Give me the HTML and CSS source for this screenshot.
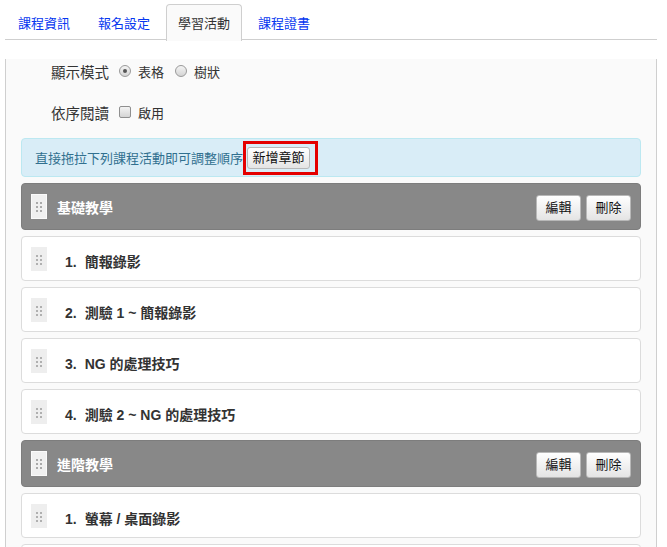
FILE: index.html
```html
<!DOCTYPE html>
<html lang="zh-Hant">
<head>
<meta charset="utf-8">
<title>學習活動</title>
<link rel="stylesheet" href="styles.css">
</head>
<body>
<div class="page">
  <ul class="tabs">
    <li class="tab"><a href="#">課程資訊</a></li>
    <li class="tab"><a href="#">報名設定</a></li>
    <li class="tab active"><a href="#">學習活動</a></li>
    <li class="tab"><a href="#">課程證書</a></li>
  </ul>
  <div class="panel">
    <div class="form-row first">
      <span class="label">顯示模式</span>
      <span class="radio checked"></span><span class="opt">表格</span>
      <span class="radio"></span><span class="opt">樹狀</span>
    </div>
    <div class="form-row second">
      <span class="label">依序閱讀</span>
      <span class="checkbox"></span><span class="opt">啟用</span>
    </div>
    <div class="info">
      <span class="info-text">直接拖拉下列課程活動即可調整順序</span>
      <span class="highlight"><button class="btn add">新增章節</button></span>
    </div>

    <div class="chapter">
      <span class="handle light"><svg width="14" height="23" viewBox="0 0 14 23"><g fill="#aaa"><rect x="4" y="7" width="2" height="2"/><rect x="8" y="7" width="2" height="2"/><rect x="4" y="11" width="2" height="2"/><rect x="8" y="11" width="2" height="2"/><rect x="4" y="15" width="2" height="2"/><rect x="8" y="15" width="2" height="2"/></g></svg></span>
      <span class="chapter-title">基礎教學</span>
      <span class="actions"><button class="btn">編輯</button><button class="btn">刪除</button></span>
    </div>
    <div class="item">
      <span class="handle"><svg width="16" height="24" viewBox="0 0 16 24"><g fill="#b0b0b0"><rect x="5" y="8" width="2" height="2"/><rect x="9" y="8" width="2" height="2"/><rect x="5" y="12" width="2" height="2"/><rect x="9" y="12" width="2" height="2"/><rect x="5" y="16" width="2" height="2"/><rect x="9" y="16" width="2" height="2"/></g></svg></span>
      <span class="item-title"><span class="num">1.</span>簡報錄影</span>
    </div>
    <div class="item">
      <span class="handle"><svg width="16" height="24" viewBox="0 0 16 24"><g fill="#b0b0b0"><rect x="5" y="8" width="2" height="2"/><rect x="9" y="8" width="2" height="2"/><rect x="5" y="12" width="2" height="2"/><rect x="9" y="12" width="2" height="2"/><rect x="5" y="16" width="2" height="2"/><rect x="9" y="16" width="2" height="2"/></g></svg></span>
      <span class="item-title"><span class="num">2.</span>測驗 1 ~ 簡報錄影</span>
    </div>
    <div class="item">
      <span class="handle"><svg width="16" height="24" viewBox="0 0 16 24"><g fill="#b0b0b0"><rect x="5" y="8" width="2" height="2"/><rect x="9" y="8" width="2" height="2"/><rect x="5" y="12" width="2" height="2"/><rect x="9" y="12" width="2" height="2"/><rect x="5" y="16" width="2" height="2"/><rect x="9" y="16" width="2" height="2"/></g></svg></span>
      <span class="item-title"><span class="num">3.</span>NG 的處理技巧</span>
    </div>
    <div class="item">
      <span class="handle"><svg width="16" height="24" viewBox="0 0 16 24"><g fill="#b0b0b0"><rect x="5" y="8" width="2" height="2"/><rect x="9" y="8" width="2" height="2"/><rect x="5" y="12" width="2" height="2"/><rect x="9" y="12" width="2" height="2"/><rect x="5" y="16" width="2" height="2"/><rect x="9" y="16" width="2" height="2"/></g></svg></span>
      <span class="item-title"><span class="num">4.</span>測驗 2 ~ NG 的處理技巧</span>
    </div>

    <div class="chapter">
      <span class="handle light"><svg width="14" height="23" viewBox="0 0 14 23"><g fill="#aaa"><rect x="4" y="7" width="2" height="2"/><rect x="8" y="7" width="2" height="2"/><rect x="4" y="11" width="2" height="2"/><rect x="8" y="11" width="2" height="2"/><rect x="4" y="15" width="2" height="2"/><rect x="8" y="15" width="2" height="2"/></g></svg></span>
      <span class="chapter-title">進階教學</span>
      <span class="actions"><button class="btn">編輯</button><button class="btn">刪除</button></span>
    </div>
    <div class="item">
      <span class="handle"><svg width="16" height="24" viewBox="0 0 16 24"><g fill="#b0b0b0"><rect x="5" y="8" width="2" height="2"/><rect x="9" y="8" width="2" height="2"/><rect x="5" y="12" width="2" height="2"/><rect x="9" y="12" width="2" height="2"/><rect x="5" y="16" width="2" height="2"/><rect x="9" y="16" width="2" height="2"/></g></svg></span>
      <span class="item-title"><span class="num">1.</span>螢幕 / 桌面錄影</span>
    </div>
    <div class="item"></div>
  </div>
</div>
</body>
</html>
```
FILE: styles.css
```css
* { box-sizing: border-box; }
html, body { margin: 0; padding: 0; background: #fff; }
body {
  font-family: "Liberation Sans", "Noto Sans CJK TC", sans-serif;
  font-size: 13px;
  color: #333;
}
.page {
  width: 652px;
  margin-left: 5px;
  padding-top: 4px;
}
.tabs {
  list-style: none;
  margin: 0;
  padding: 0 0 0 1px;
  display: flex;
  height: 36px;
  border-bottom: 1px solid #cfcfcf;
}
.tab {
  height: 37px;
  margin-right: 4px;
  margin-bottom: -1px;
  border: 1px solid transparent;
  border-bottom: none;
  border-radius: 4px 4px 0 0;
}
.tab a {
  display: block;
  padding: 8px 11px 0;
  line-height: 22px;
  font-size: 13px;
  color: #0637f0;
  text-decoration: none;
}
.tab.active {
  background: #fafafa;
  border-color: #cfcfcf;
}
.tab.active a { color: #333; }

.panel {
  border: 1px solid #cfcfcf;
  border-top: none;
  background: #fafafa;
  padding: 0 15px 15px;
  min-height: 520px;
}
.form-row {
  display: flex;
  align-items: center;
  height: 24px;
  padding-left: 30px;
}
.form-row.first { margin-top: 19px; }
.form-row.second { margin-top: 17px; }
.label {
  font-size: 14.5px;
  width: 58px;
  margin-right: 10px;
  color: #333;
  white-space: nowrap;
}
.radio {
  width: 12px;
  height: 12px;
  border-radius: 50%;
  border: 1px solid #9a9a9a;
  background: linear-gradient(#f4f4f4, #d4d4d4);
  display: flex;
  align-items: center;
  justify-content: center;
  margin-right: 7px;
}
.radio.checked::after {
  content: "";
  width: 4px;
  height: 4px;
  border-radius: 50%;
  background: #555;
}
.checkbox {
  width: 12px;
  height: 12px;
  border: 1px solid #8f8f8f;
  border-radius: 2px;
  background: linear-gradient(#f4f4f4, #d4d4d4);
  margin-right: 7px;
}
.opt {
  font-size: 13px;
  margin-right: 11px;
  color: #333;
}

.info {
  margin-top: 14px;
  height: 39px;
  border: 1px solid #bce8f1;
  border-radius: 4px;
  background: #d9edf7;
  padding: 0 13px;
  display: flex;
  align-items: center;
}
.info-text {
  color: #31708f;
  font-size: 13px;
}
.highlight {
  display: inline-flex;
  border: 3px solid #e40000;
  padding: 3px 5px 3px 1px;
}
.btn {
  font-family: "Liberation Sans", "Noto Sans CJK TC", sans-serif;
  font-size: 13px;
  color: #111;
  background: linear-gradient(#ffffff, #e4e4e4);
  border: 1px solid #b8b8b8;
  border-radius: 3px;
  height: 26px;
  width: 45px;
  padding: 0;
  line-height: 24px;
}
.btn.add {
  width: 63px;
  height: 22px;
  line-height: 20px;
}

.chapter {
  margin-top: 6px;
  height: 47px;
  background: #888888;
  border: 1px solid #7d7d7d;
  border-radius: 4px;
  padding: 0 9px;
  display: flex;
  align-items: center;
}
.handle {
  width: 16px;
  height: 24px;
  background: #eeeeee;
  display: flex;
}
.handle.light {
  height: 25px;
  background: #f0f0f0;
  border: 1px solid #fafafa;
}
.chapter-title {
  margin-left: 10px;
  color: #fff;
  font-weight: 700;
  font-size: 14px;
}
.actions {
  margin-left: auto;
  display: flex;
  gap: 5px;
  margin-top: 3px;
}
.item {
  margin-top: 6px;
  height: 45px;
  background: #fff;
  border: 1px solid #dcdcdc;
  border-radius: 4px;
  padding: 0 9px;
  display: flex;
  align-items: center;
}
.item-title {
  margin-left: 18px;
  margin-top: 4px;
  font-weight: 700;
  font-size: 14px;
  color: #333;
}
.num {
  margin-right: 8px;
}
```
